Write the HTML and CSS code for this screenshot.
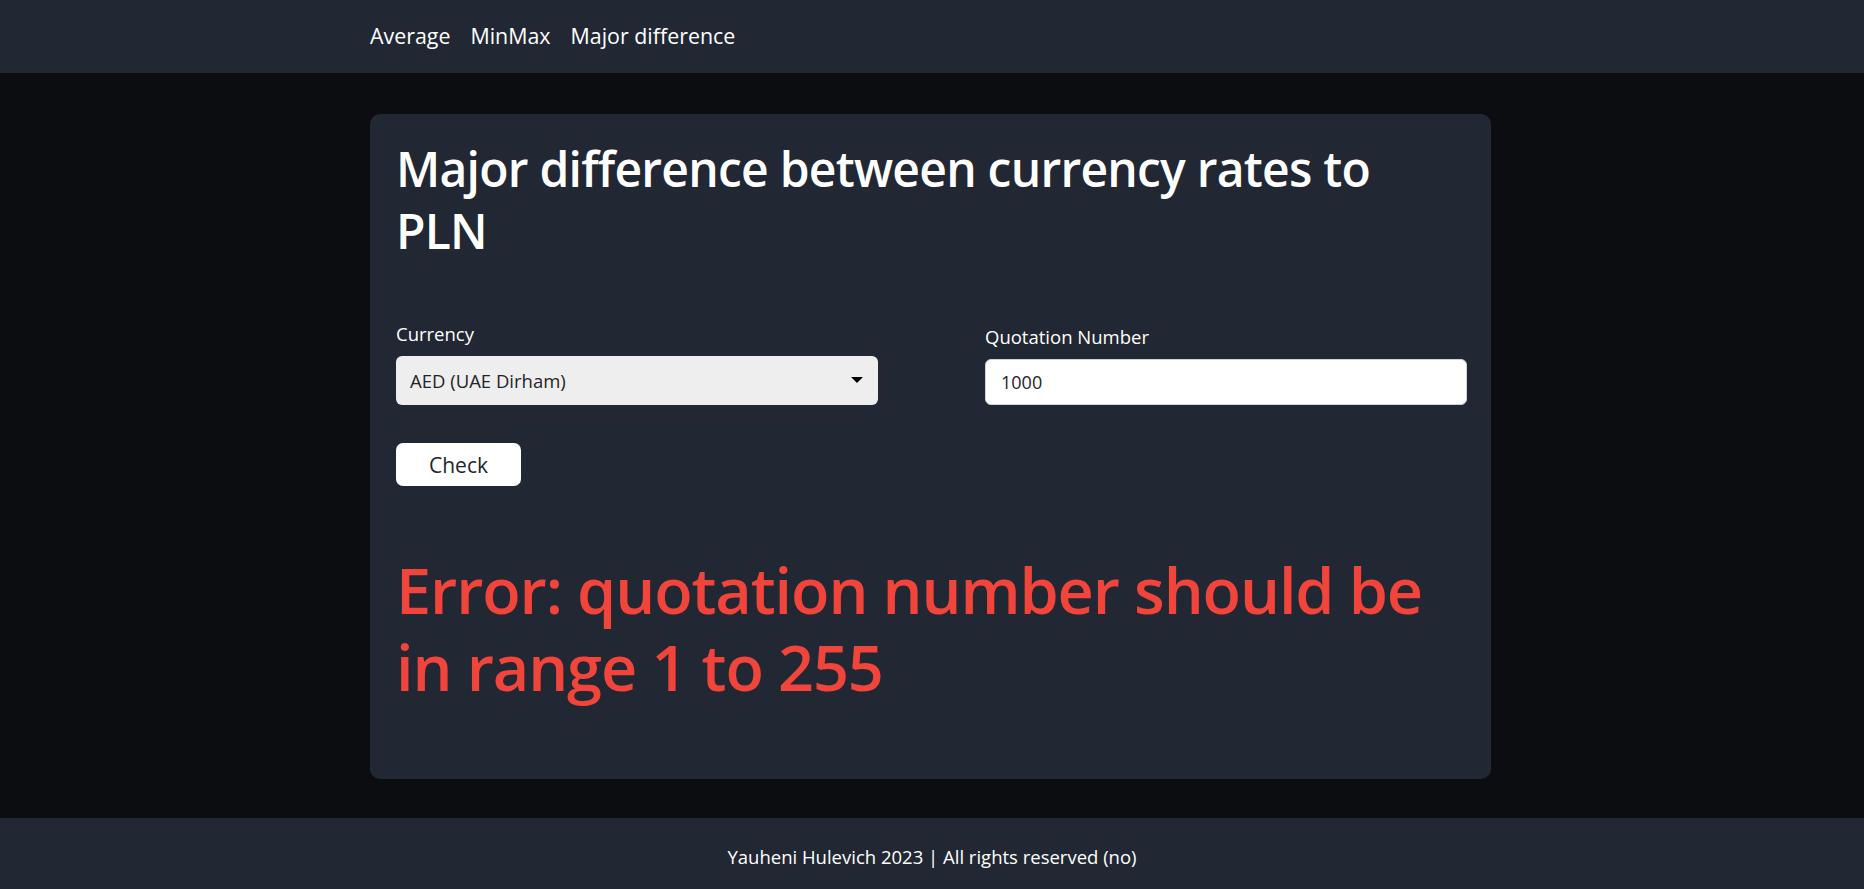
FILE: index.html
```html
<!DOCTYPE html>
<html lang="en">
<head>
<meta charset="utf-8">
<title>Major difference</title>
<link rel="stylesheet" href="styles.css">
</head>
<body>
<header class="topbar">
  <nav class="nav">
    <a class="nav-link" href="#">Average</a>
    <a class="nav-link" href="#">MinMax</a>
    <a class="nav-link" href="#">Major difference</a>
  </nav>
</header>
<main class="main">
  <section class="card">
    <h1 class="title">Major difference between currency rates to PLN</h1>
    <form class="form">
      <div class="fields">
        <div class="field">
          <label class="label">Currency</label>
          <div class="select">
            <span class="select-text">AED (UAE Dirham)</span>
            <span class="caret"></span>
          </div>
        </div>
        <div class="field field-right">
          <label class="label">Quotation Number</label>
          <div class="input">1000</div>
        </div>
      </div>
      <button type="button" class="btn">Check</button>
    </form>
    <p class="error">Error: quotation number should be in range 1 to 255</p>
  </section>
</main>
<footer class="footer">Yauheni Hulevich 2023 | All rights reserved (no)</footer>
</body>
</html>
```
FILE: styles.css
```css
* { box-sizing: border-box; }
html, body { margin: 0; padding: 0; }
body {
  background: #0b0d11;
  color: #ffffff;
  font-family: "Open Sans", "Noto Sans", sans-serif;
  height: 889px;
  display: flex;
  flex-direction: column;
  overflow: hidden;
}
.topbar {
  background: #212733;
  height: 73px;
  flex: none;
  display: flex;
  align-items: center;
  padding-bottom: 3px;
}
.nav {
  margin-left: 370px;
  display: flex;
  gap: 20px;
}
.nav-link {
  color: #ffffff;
  text-decoration: none;
  font-size: 21.4px;
}
.main {
  flex: 1;
  padding-top: 41px;
  padding-left: 370px;
}
.card {
  width: 1121px;
  height: 665px;
  background: #212733;
  border-radius: 10px;
  padding: 24px 26px;
}
.title {
  margin: 0;
  font-size: 48px;
  line-height: 62px;
  font-weight: 600;
  letter-spacing: -0.75px;
}
.form { margin-top: 60px; }
.fields {
  display: grid;
  grid-template-columns: 482px 482px;
  column-gap: 107px;
  align-items: end;
}
.field { display: flex; flex-direction: column; }
.label {
  font-size: 18.5px;
  line-height: 24px;
  margin-bottom: 10px;
}
.select {
  height: 49px;
  background: #eeeeee;
  border-radius: 6px;
  color: #212529;
  display: flex;
  align-items: center;
  justify-content: space-between;
  padding: 0 15px 0 14px;
  font-size: 18.5px;
}
.caret {
  width: 0; height: 0;
  border-left: 6px solid transparent;
  border-right: 6px solid transparent;
  border-top: 6px solid #000;
  margin-top: -2px;
}
.input {
  height: 46px;
  background: #ffffff;
  border: 1px solid #ced4da;
  border-radius: 6px;
  color: #212529;
  display: flex;
  align-items: center;
  padding: 0 15px;
  font-size: 18px;
}
.btn {
  display: block;
  margin-top: 38px;
  width: 125px;
  height: 43px;
  background: #ffffff;
  color: #212529;
  border: 0;
  border-radius: 7px;
  font-family: inherit;
  font-size: 21px;
  padding: 0;
}
.error {
  margin: 65px 0 0;
  color: #f1443a;
  font-size: 63px;
  line-height: 77px;
  font-weight: 600;
  letter-spacing: -1.1px;
}
.footer {
  background: #212733;
  height: 71px;
  flex: none;
  display: flex;
  align-items: center;
  justify-content: center;
  font-size: 18.5px;
  padding-top: 6px;
}
```
